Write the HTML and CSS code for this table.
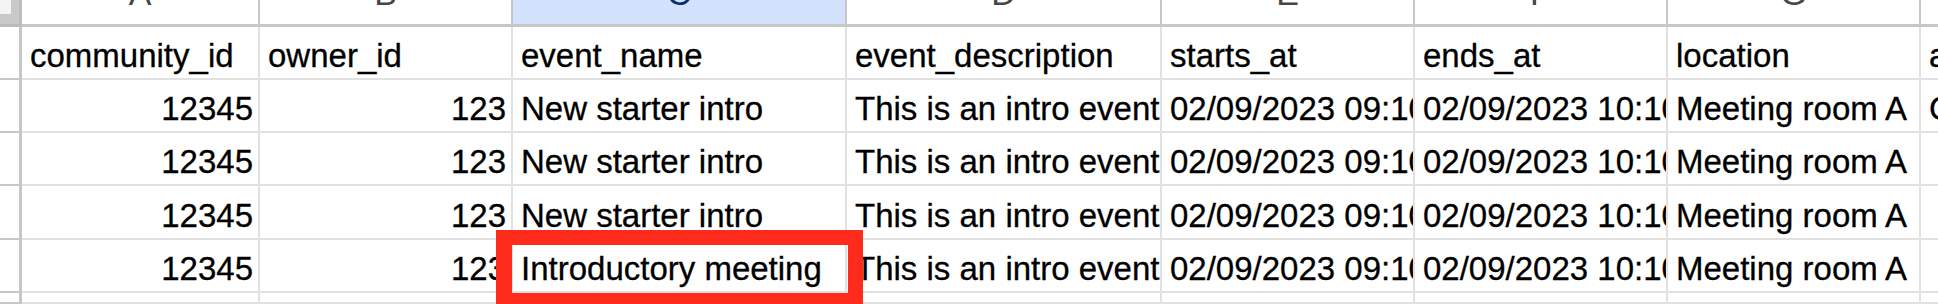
FILE: index.html
```html
<!DOCTYPE html>
<html lang="en">
<head>
<meta charset="utf-8">
<title>Events sheet</title>
<link rel="stylesheet" href="styles.css">
</head>
<body>
<div class="page">
  <div class="sheet">
    <div class="corner"><div class="corner-inner"></div></div>
    <div class="ch"><span>A</span></div>
    <div class="ch"><span>B</span></div>
    <div class="ch sel"><span>C</span></div>
    <div class="ch"><span>D</span></div>
    <div class="ch"><span>E</span></div>
    <div class="ch"><span>F</span></div>
    <div class="ch"><span>G</span></div>
    <div class="ch"><span>H</span></div>

    <div class="rh"></div>
    <div class="c">community_id</div>
    <div class="c">owner_id</div>
    <div class="c">event_name</div>
    <div class="c">event_description</div>
    <div class="c">starts_at</div>
    <div class="c">ends_at</div>
    <div class="c">location</div>
    <div class="c">attendees</div>

    <div class="rh"></div>
    <div class="c n">12345</div>
    <div class="c n">123</div>
    <div class="c">New starter intro</div>
    <div class="c">This is an intro event</div>
    <div class="c">02/09/2023 09:10</div>
    <div class="c">02/09/2023 10:10</div>
    <div class="c">Meeting room A</div>
    <div class="c">Confirmed</div>

    <div class="rh"></div>
    <div class="c n">12345</div>
    <div class="c n">123</div>
    <div class="c">New starter intro</div>
    <div class="c">This is an intro event</div>
    <div class="c">02/09/2023 09:10</div>
    <div class="c">02/09/2023 10:10</div>
    <div class="c">Meeting room A</div>
    <div class="c"></div>

    <div class="rh"></div>
    <div class="c n">12345</div>
    <div class="c n">123</div>
    <div class="c">New starter intro</div>
    <div class="c">This is an intro event</div>
    <div class="c">02/09/2023 09:10</div>
    <div class="c">02/09/2023 10:10</div>
    <div class="c">Meeting room A</div>
    <div class="c"></div>

    <div class="rh"></div>
    <div class="c n">12345</div>
    <div class="c n">123</div>
    <div class="c">Introductory meeting</div>
    <div class="c">This is an intro event</div>
    <div class="c">02/09/2023 09:10</div>
    <div class="c">02/09/2023 10:10</div>
    <div class="c">Meeting room A</div>
    <div class="c"></div>

    <div class="rh"></div>
    <div class="c"></div>
    <div class="c"></div>
    <div class="c"></div>
    <div class="c"></div>
    <div class="c"></div>
    <div class="c"></div>
    <div class="c"></div>
    <div class="c"></div>
  </div>
  <div class="highlight"></div>
</div>
</body>
</html>
```

FILE: styles.css
```css
* {
  box-sizing: border-box;
}

html, body {
  margin: 0;
  padding: 0;
  background: #ffffff;
  overflow: hidden;
}

.page {
  position: relative;
  width: 1938px;
  height: 304px;
  overflow: hidden;
  font-family: "Liberation Sans", Arial, sans-serif;
  color: #000000;
}

.sheet {
  display: grid;
  width: 2174px;
  grid-template-columns: 22px 238px 253px 334px 315px 253px 253px 253px 253px;
  grid-template-rows: 27px 53px 53px 53px 54px 53px 1fr;
  height: 100%;
}

.corner {
  background: #c9c9c9;
  border-right: 3px solid #bdbdbd;
  border-bottom: 3px solid #bdbdbd;
}

.corner-inner {
  width: 11px;
  height: 14px;
  background: #f4f4f4;
}

.ch {
  background: #ffffff;
  border-right: 2px solid #c7c7c7;
  border-bottom: 3px solid #c7c7c7;
  overflow: hidden;
  text-align: center;
  color: #444746;
  font-size: 34px;
}

.ch span {
  display: block;
  line-height: 34px;
  margin-top: -24px;
}

.ch.sel {
  background: #d3e3fd;
  color: #0b2e6b;
}

.rh {
  background: #ffffff;
  border-right: 3px solid #c7c7c7;
  border-bottom: 2px solid #c7c7c7;
}

.c {
  display: flex;
  align-items: flex-end;
  border-right: 2px solid #e1e1e1;
  border-bottom: 2px solid #e1e1e1;
  padding: 0 5px 3px 8px;
  font-size: 33px;
  line-height: 38px;
  white-space: nowrap;
  overflow: hidden;
  background: #ffffff;
  -webkit-text-stroke: 0.3px #000000;
}

.c.n {
  justify-content: flex-end;
}

.highlight {
  position: absolute;
  left: 496px;
  top: 230px;
  width: 367px;
  height: 78px;
  border: 15px solid #fe2a1c;
  border-left-width: 16px;
}
```
